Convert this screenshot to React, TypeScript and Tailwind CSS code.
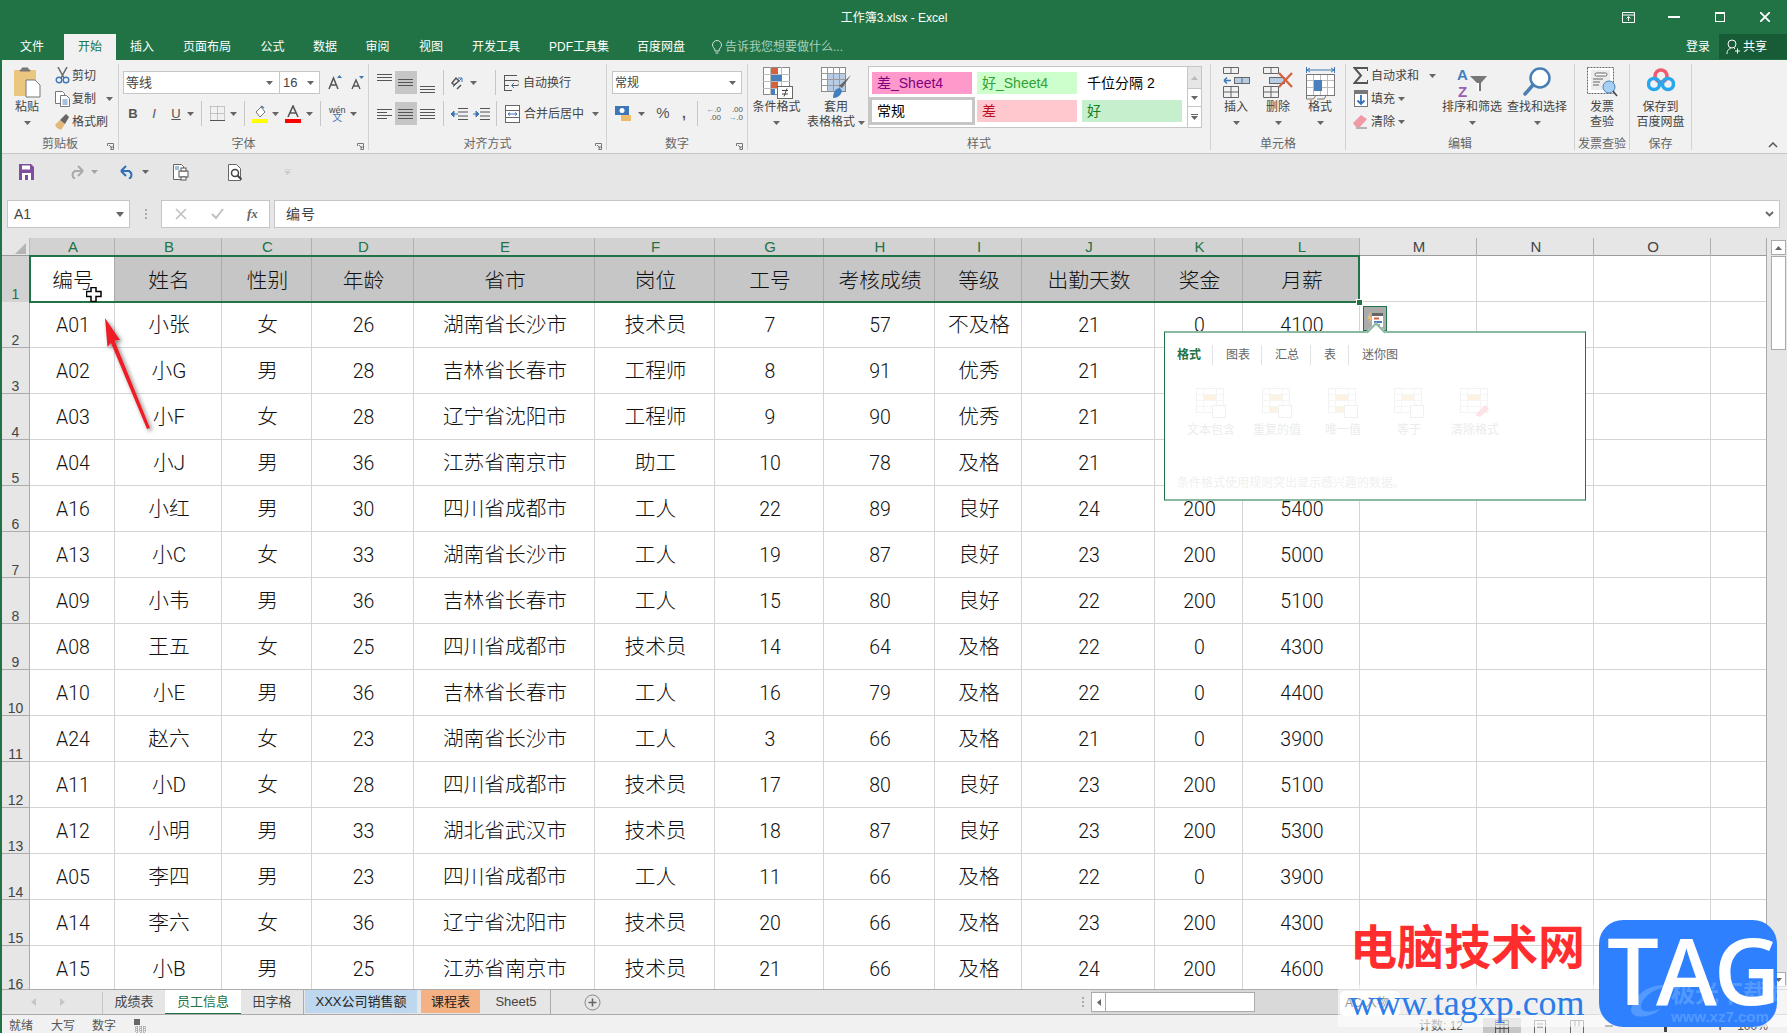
import React from 'react';

const COLS =
  'grid grid-cols-[28px_85px_107px_90px_102px_181px_120px_109px_111px_87px_133px_88px_117px_117px_117px_117px_56px]';

const HEAD = ['编号', '姓名', '性别', '年龄', '省市', '岗位', '工号', '考核成绩', '等级', '出勤天数', '奖金', '月薪'];

const ROWS = [
  ['A01', '小张', '女', '26', '湖南省长沙市', '技术员', '7', '57', '不及格', '21', '0', '4100'],
  ['A02', '小G', '男', '28', '吉林省长春市', '工程师', '8', '91', '优秀', '21', '200', '5100'],
  ['A03', '小F', '女', '28', '辽宁省沈阳市', '工程师', '9', '90', '优秀', '21', '200', '5100'],
  ['A04', '小J', '男', '36', '江苏省南京市', '助工', '10', '78', '及格', '21', '0', '4300'],
  ['A16', '小红', '男', '30', '四川省成都市', '工人', '22', '89', '良好', '24', '200', '5400'],
  ['A13', '小C', '女', '33', '湖南省长沙市', '工人', '19', '87', '良好', '23', '200', '5000'],
  ['A09', '小韦', '男', '36', '吉林省长春市', '工人', '15', '80', '良好', '22', '200', '5100'],
  ['A08', '王五', '女', '25', '四川省成都市', '技术员', '14', '64', '及格', '22', '0', '4300'],
  ['A10', '小E', '男', '36', '吉林省长春市', '工人', '16', '79', '及格', '22', '0', '4400'],
  ['A24', '赵六', '女', '23', '湖南省长沙市', '工人', '3', '66', '及格', '21', '0', '3900'],
  ['A11', '小D', '女', '28', '四川省成都市', '技术员', '17', '80', '良好', '23', '200', '5100'],
  ['A12', '小明', '男', '33', '湖北省武汉市', '技术员', '18', '87', '良好', '23', '200', '5300'],
  ['A05', '李四', '男', '23', '四川省成都市', '工人', '11', '66', '及格', '22', '0', '3900'],
  ['A14', '李六', '女', '36', '辽宁省沈阳市', '技术员', '20', '66', '及格', '23', '200', '4300'],
  ['A15', '小B', '男', '25', '江苏省南京市', '技术员', '21', '66', '及格', '24', '200', '4600'],
];

const TABS = [
  ['文件', 'w-[64px]'],
  ['开始', 'w-[52px]'],
  ['插入', 'w-[52px]'],
  ['页面布局', 'w-[78px]'],
  ['公式', 'w-[53px]'],
  ['数据', 'w-[52px]'],
  ['审阅', 'w-[53px]'],
  ['视图', 'w-[54px]'],
  ['开发工具', 'w-[76px]'],
  ['PDF工具集', 'w-[90px]'],
  ['百度网盘', 'w-[74px]'],
];

const Caret = ({ className = '' }: { className?: string }) => (
  <svg width="7" height="4" viewBox="0 0 7 4" className={`shrink-0 ${className}`}>
    <path d="M0 0h7L3.5 4z" fill="#666" />
  </svg>
);

const Sep = ({ className = '' }: { className?: string }) => (
  <div className={`w-px h-[25px] bg-[#c6c6c6] shrink-0 ${className}`} />
);

const Big = ({
  width,
  icon,
  lines,
  chevron = true,
  inlineCaret = false,
}: {
  width: string;
  icon: React.ReactNode;
  lines: string[];
  chevron?: boolean;
  inlineCaret?: boolean;
}) => (
  <div className={`${width} flex flex-col items-center shrink-0`}>
    <div className="h-[36px] pt-[3px] flex justify-center">{icon}</div>
    {lines.map((l, i) => (
      <div key={l} className="h-[15px] leading-[15px] whitespace-nowrap flex items-center gap-[3px]">
        {l}
        {inlineCaret && i === lines.length - 1 && <Caret />}
      </div>
    ))}
    {chevron && lines.length === 1 && (
      <div className="h-[15px] flex items-center">
        <Caret />
      </div>
    )}
  </div>
);

const Group = ({
  width,
  label,
  launcher = false,
  children,
}: {
  width: string;
  label: string;
  launcher?: boolean;
  children: React.ReactNode;
}) => (
  <div className={`${width} h-[86px] shrink-0 flex flex-col border-r border-[#d2d2d2]`}>
    <div className="h-[72px] flex">{children}</div>
    <div className="h-[14px] pt-[2px] flex items-center justify-center relative text-[#666] leading-none">
      {label}
      {launcher && (
        <svg width="7" height="7" viewBox="0 0 7 7" className="absolute right-[4px] bottom-[0px]">
          <path d="M.5 3V.5H6.500V6.500H3.500M2 2l3 3M5 3v2H3" fill="none" stroke="#777" />
        </svg>
      )}
    </div>
  </div>
);

const Lines = ({ rows }: { rows: [number, number][] }) => (
  <svg width="18" height="16" viewBox="0 0 18 16">
    {rows.map(([y, w]) => (
      <rect key={y} x="1" y={y} width={w} height="1" fill="#555" />
    ))}
  </svg>
);

const ClipboardIcon = () => (
  <svg width="29" height="31" viewBox="0 0 29 31">
    <rect x="0" y="3" width="22" height="26" rx="1" fill="#eac67f" />
    <path d="M6 4h10v-1h-2V1H8v2H6z" fill="#777" stroke="#777" />
    <path d="M12 13h9l5 5v12H12z" fill="#fff" stroke="#777" />
  </svg>
);

const ScissorsIcon = () => (
  <svg width="15" height="17" viewBox="0 0 15 17">
    <path d="M3 0l6 11M12 0L6 11" stroke="#666" strokeWidth="1.500" />
    <circle cx="4" cy="13" r="2.800" fill="none" stroke="#3f76b5" strokeWidth="1.400" />
    <circle cx="11" cy="13" r="2.800" fill="none" stroke="#3f76b5" strokeWidth="1.400" />
  </svg>
);

const CopyIcon = () => (
  <svg width="15" height="16" viewBox="0 0 15 16">
    <path d="M.5.500h7l2 2v10H.500z" fill="#fff" stroke="#777" />
    <path d="M5.500 4.500h6l3 3v8h-9z" fill="#fff" stroke="#777" />
    <path d="M7.500 9h5M7.500 11h5M7.500 13h5" stroke="#4d7fb8" />
  </svg>
);

const BrushIcon = () => (
  <svg width="16" height="16" viewBox="0 0 16 16">
    <path d="M1 11l5-5 5 4-4 6-4-2z" fill="#e4b878" />
    <path d="M6 6l6-6 3 3-4 7z" fill="#666" />
  </svg>
);

const FillIcon = () => (
  <svg width="16" height="18" viewBox="0 0 16 18">
    <path d="M4 7l5-5 4 5-5 5z" fill="#fff" stroke="#777" />
    <path d="M9 1l3 2" stroke="#3f76b5" strokeWidth="1.500" />
    <rect x="0" y="14" width="16" height="4" fill="#ffff00" />
  </svg>
);

const FontColorIcon = () => (
  <svg width="16" height="18" viewBox="0 0 16 18">
    <path d="M3 12L8 1l5 11M5 8h6" fill="none" stroke="#555" strokeWidth="1.600" />
    <rect x="0" y="14" width="16" height="4" fill="#ff0000" />
  </svg>
);

const BorderIcon = () => (
  <svg width="15" height="15" viewBox="0 0 15 15">
    <path d="M.5.500h14v14M.5.5v14M7.500.5v14M.5 7.500h14" fill="none" stroke="#999" strokeDasharray="1 1" />
    <path d="M0 14.500h15" stroke="#555" />
  </svg>
);

const WrapIcon = () => (
  <svg width="15" height="18" viewBox="0 0 15 18">
    <path d="M1 1.500h12M1 6.500h12a2 2 0 0 1 0 5H8M1 11.500h4M1 16.500h7" fill="none" stroke="#555" />
    <path d="M10 9l-2.500 2.500L10 14" fill="none" stroke="#3f76b5" />
    <path d="M.5 1v16" stroke="#555" />
  </svg>
);

const MergeIcon = () => (
  <svg width="15" height="18" viewBox="0 0 15 18">
    <rect x=".5" y=".5" width="14" height="17" fill="#fff" stroke="#666" />
    <path d="M0 5.500h15M0 12.500h15" stroke="#666" />
    <path d="M3 9h9M3 9l2-1.500M3 9l2 1.500M12 9l-2-1.500M12 9l-2 1.500" stroke="#3f76b5" fill="none" />
  </svg>
);

const CondIcon = () => (
  <svg width="30" height="32" viewBox="0 0 30 32">
    <rect x=".5" y=".5" width="26" height="27" fill="#fff" stroke="#888" />
    <path d="M0 7.500h27M0 14.500h27M0 21.500h27M7.500 0v28M18.500 0v28" stroke="#bbb" />
    <rect x="8" y="1" width="7" height="6" fill="#d6613f" />
    <rect x="8" y="8" width="11" height="6" fill="#4a7fbb" />
    <rect x="8" y="15" width="7" height="6" fill="#d6613f" />
    <rect x="8" y="22" width="4" height="6" fill="#4a7fbb" />
    <rect x="14.500" y="19.500" width="15" height="12" fill="#fff" stroke="#666" />
    <path d="M19 23.500h6M19 27h6M24 21.500l-3 8" stroke="#444" fill="none" />
  </svg>
);

const TableIcon = () => (
  <svg width="31" height="32" viewBox="0 0 31 32">
    <rect x=".5" y=".5" width="24" height="24" fill="#fff" stroke="#888" />
    <rect x="6" y="6" width="18" height="18" fill="#b7cde6" />
    <path d="M6.500 0v25M12.500 0v25M18.500 0v25M0 6.500h25M0 12.500h25M0 18.500h25" stroke="#999" />
    <path d="M30 8l-9 13-3-2z" fill="#666" />
    <path d="M12 31c0-6 3-10 7-10l2 3c-1 4-4 7-9 7z" fill="#3f7fc0" />
  </svg>
);

const InsertIcon = () => (
  <svg width="27" height="31" viewBox="0 0 27 31">
    <path d="M.5.500h15v6H.500zM8 .5v6" fill="none" stroke="#666" />
    <rect x="11.500" y="10.500" width="15" height="6" fill="#b7cde6" stroke="#666" />
    <path d="M19 10v7" stroke="#666" />
    <path d="M1 13.500h7M1 13.500l3-3M1 13.500l3 3" fill="none" stroke="#3f76b5" strokeWidth="1.500" />
    <path d="M.5 19.500h15v11H.500zM8 19.500v11M.5 25h15" fill="none" stroke="#666" />
  </svg>
);

const DeleteIcon = () => (
  <svg width="31" height="31" viewBox="0 0 31 31">
    <path d="M.5.500h15v6H.500zM8 .5v6" fill="none" stroke="#666" />
    <rect x="6.500" y="10.500" width="15" height="6" fill="#b7cde6" stroke="#666" />
    <path d="M.5 19.500h15v11H.500zM8 19.500v11M.5 25h15" fill="none" stroke="#666" />
    <path d="M16 6l13 14M29 6L16 20" stroke="#d6613f" strokeWidth="2.200" />
  </svg>
);

const FormatIcon = () => (
  <svg width="29" height="33" viewBox="0 0 29 33">
    <path d="M1 3h27M1 3l3-2M1 3l3 2M28 3l-3-2M28 3l-3 2M.5 0v6M28.500 0v6" fill="none" stroke="#3f76b5" />
    <rect x=".5" y="7.500" width="28" height="21" fill="#fff" stroke="#777" />
    <path d="M7.500 8v20M21.500 8v20M14.500 8v20M1 13.500h27M1 20.500h27" stroke="#bbb" />
    <rect x="8" y="13" width="8" height="11" fill="#4a7fbb" />
    <path d="M.5 28v4h7l2-3M11 32h7l2-3" fill="none" stroke="#777" />
  </svg>
);

const SigmaIcon = () => (
  <svg width="15" height="17" viewBox="0 0 15 17">
    <path d="M15 4V1H1.500L8 8.500 1.500 16H15v-3" fill="none" stroke="#555" strokeWidth="2" />
  </svg>
);

const FillDownIcon = () => (
  <svg width="14" height="17" viewBox="0 0 14 17">
    <rect x=".5" y=".5" width="13" height="16" fill="#fff" stroke="#777" />
    <rect x="0" y="0" width="14" height="4" fill="#777" />
    <path d="M7 5v9M3.500 10.500L7 14l3.500-3.500" fill="none" stroke="#2f6fb5" strokeWidth="1.800" />
  </svg>
);

const EraserIcon = () => (
  <svg width="15" height="15" viewBox="0 0 15 15">
    <path d="M0 9l8-8 6 4-7 8H3z" fill="#ef9aa5" />
    <path d="M3 14h11" stroke="#777" />
  </svg>
);

const SortIcon = () => (
  <svg width="30" height="32" viewBox="0 0 30 32">
    <text x="0" y="13" fontSize="15" fontWeight="700" fill="#3f7fc0" fontFamily="Liberation Sans">A</text>
    <text x="1" y="30" fontSize="15" fontWeight="700" fill="#9a5fb5" fontFamily="Liberation Sans">Z</text>
    <path d="M13 9h17l-6 7v8h-4v-8z" fill="#777" />
    <path d="M20 16v8h2v-8" fill="#fff" />
  </svg>
);

const SearchIcon = () => (
  <svg width="28" height="31" viewBox="0 0 28 31">
    <circle cx="17" cy="11" r="9.500" fill="#fff" stroke="#4a7fb5" strokeWidth="2.500" />
    <path d="M10 18L2 27" stroke="#4a7fb5" strokeWidth="3.500" strokeLinecap="round" />
  </svg>
);

const InvoiceIcon = () => (
  <svg width="31" height="31" viewBox="0 0 31 31">
    <rect x=".5" y=".5" width="26" height="26" fill="#fff" stroke="#666" strokeDasharray="2 1" />
    <rect x="4" y="3" width="19" height="20" fill="#ececec" />
    <rect x="8" y="6" width="12" height="3" rx="1.500" fill="#fff" stroke="#666" />
    <path d="M6 12h10M6 15h7M6 18h6" stroke="#666" />
    <circle cx="22" cy="20" r="6" fill="#a5d0f3" stroke="#4a7fb5" />
    <path d="M26 24l4 5" stroke="#444" strokeWidth="1.500" />
  </svg>
);

const BaiduIcon = () => (
  <svg width="28" height="26" viewBox="0 0 28 26">
    <circle cx="14" cy="9" r="6" fill="none" stroke="#ef5a6c" strokeWidth="3.500" />
    <circle cx="7" cy="17" r="5.500" fill="none" stroke="#29a7ee" strokeWidth="3.500" />
    <circle cx="21" cy="17" r="5.500" fill="none" stroke="#29a7ee" strokeWidth="3.500" />
  </svg>
);

const SmallRow = ({ icon, text, caret, iconBox }: { icon: React.ReactNode; text: string; caret: string; iconBox: string }) => (
  <div className="h-[23px] flex items-center">
    <div className={`${iconBox} flex justify-center shrink-0`}>{icon}</div>
    <span className="whitespace-nowrap">{text}</span>
    <Caret className={caret} />
  </div>
);

const Ribbon = () => (
  <div className="h-[94px] bg-[#f1f1f1] border-b border-[#c6c6c6] pt-[4px] flex text-[12px] text-[#444]">
    <Group width="w-[117px]" label="剪贴板" launcher>
      <Big
        width="w-[50px]"
        icon={
          <div className="pl-[3px]">
            <ClipboardIcon />
          </div>
        }
        lines={['粘贴']}
      />
      <div className="flex flex-col">
        <SmallRow icon={<ScissorsIcon />} text="剪切" caret="hidden" iconBox="w-[20px]" />
        <SmallRow icon={<CopyIcon />} text="复制" caret="ml-[10px]" iconBox="w-[20px]" />
        <SmallRow icon={<BrushIcon />} text="格式刷" caret="hidden" iconBox="w-[20px]" />
      </div>
    </Group>

    <Group width="w-[250px]" label="字体" launcher>
      <div className="pl-[4px] pt-[7px] flex flex-col gap-[8px]">
        <div className="h-[23px] flex items-center">
          <div className="w-[157px] h-[23px] bg-white border border-[#c6c6c6] flex items-center justify-between pl-[2px] pr-[6px] text-[13px]">
            等线
            <Caret />
          </div>
          <div className="w-[40px] h-[23px] bg-white border border-l-0 border-[#c6c6c6] flex items-center justify-between pl-[3px] pr-[5px] text-[13px]">
            16
            <Caret />
          </div>
          <div className="w-[27px] flex justify-center pl-[3px]">
            <svg width="15" height="15" viewBox="0 0 15 15">
              <path d="M1 14L5.500 3 10 14M3 10h5" fill="none" stroke="#555" strokeWidth="1.500" />
              <path d="M9 3l2.500-3L14 3z" fill="#3f76b5" />
            </svg>
          </div>
          <div className="w-[20px] flex justify-center">
            <svg width="13" height="14" viewBox="0 0 13 14">
              <path d="M1 13l4-9 4 9M2.500 10h5" fill="none" stroke="#555" strokeWidth="1.400" />
              <path d="M8 0h5l-2.500 3z" fill="#3f76b5" />
            </svg>
          </div>
        </div>
        <div className="h-[23px] flex items-center text-[#555]">
          <span className="w-[20px] text-center font-bold text-[13px]">B</span>
          <span className="w-[22px] text-center italic text-[13px]">I</span>
          <span className="w-[22px] text-center underline text-[13px]">U</span>
          <Caret className="mr-[7px]" />
          <Sep className="mr-[8px]" />
          <BorderIcon />
          <Caret className="ml-[5px] mr-[7px]" />
          <Sep className="mr-[7px]" />
          <FillIcon />
          <Caret className="ml-[4px] mr-[6px]" />
          <FontColorIcon />
          <Caret className="ml-[5px] mr-[7px]" />
          <Sep className="mr-[8px]" />
          <div className="flex flex-col items-center leading-[8px] text-[9px]">
            <span className="text-[#444]">wén</span>
            <span className="text-[#3f76b5] text-[10px]">文</span>
          </div>
          <Caret className="ml-[4px]" />
        </div>
      </div>
    </Group>

    <Group width="w-[238px]" label="对齐方式" launcher>
      <div className="pl-[6px] pt-[7px] flex flex-col gap-[8px]">
        <div className="h-[23px] flex items-center">
          <div className="w-[20px] h-[23px] flex justify-center items-start pt-[1px]">
            <Lines rows={[[2, 15], [5, 15], [8, 15]]} />
          </div>
          <div className="w-[22px] h-[23px] bg-[#c6c6c6] flex justify-center items-center">
            <Lines rows={[[4, 15], [7, 15], [10, 15]]} />
          </div>
          <div className="w-[22px] h-[23px] flex justify-center items-end">
            <Lines rows={[[8, 15], [11, 15], [14, 15]]} />
          </div>
          <Sep className="ml-[4px] mr-[7px]" />
          <svg width="16" height="16" viewBox="0 0 16 16">
            <path d="M2 12l9-9M11 3H7M11 3v4" fill="none" stroke="#3f76b5" />
            <path d="M1 8l4-5 3 3-5 4zM6 14l4-4" fill="none" stroke="#555" strokeWidth="1.500" />
          </svg>
          <Caret className="ml-[3px] mr-[18px]" />
          <Sep className="mr-[8px]" />
          <WrapIcon />
          <span className="ml-[4px] whitespace-nowrap">自动换行</span>
        </div>
        <div className="h-[23px] flex items-center">
          <div className="w-[20px] flex justify-center">
            <Lines rows={[[3, 15], [6, 10], [9, 15], [12, 10]]} />
          </div>
          <div className="w-[22px] h-[23px] bg-[#c6c6c6] flex justify-center items-center">
            <Lines rows={[[3, 15], [6, 15], [9, 15], [12, 15]]} />
          </div>
          <div className="w-[22px] flex justify-center">
            <Lines rows={[[3, 15], [6, 15], [9, 15], [12, 15]]} />
          </div>
          <Sep className="ml-[4px] mr-[7px]" />
          <svg width="17" height="14" viewBox="0 0 17 14">
            <path d="M7 1.500h10M7 5h10M7 9h10M7 12.500h10" stroke="#555" />
            <path d="M0 7h7M0 7l3-3v6z" fill="#3f76b5" stroke="#3f76b5" />
          </svg>
          <svg width="17" height="14" viewBox="0 0 17 14" className="ml-[5px]">
            <path d="M7 1.500h10M7 5h10M7 9h10M7 12.500h10" stroke="#555" />
            <path d="M0 7h6M6 7l-3-3v6z" fill="#3f76b5" stroke="#3f76b5" />
          </svg>
          <Sep className="ml-[6px] mr-[8px]" />
          <MergeIcon />
          <span className="ml-[4px] whitespace-nowrap">合并后居中</span>
          <Caret className="ml-[8px]" />
        </div>
      </div>
    </Group>

    <Group width="w-[141px]" label="数字" launcher>
      <div className="pl-[5px] pt-[7px] flex flex-col gap-[8px]">
        <div className="w-[130px] h-[23px] bg-white border border-[#c6c6c6] flex items-center justify-between pl-[2px] pr-[5px] text-[12px]">
          常规
          <Caret />
        </div>
        <div className="h-[23px] flex items-center text-[#555]">
          <svg width="17" height="17" viewBox="0 0 17 17" className="ml-[3px]">
            <rect x="0" y="1" width="14" height="9" fill="#3f76b5" />
            <circle cx="7" cy="5.500" r="2.500" fill="#fff" />
            <path d="M6 11h10M6 13h10M6 15h10" stroke="#eaa93f" strokeWidth="1.500" />
          </svg>
          <Caret className="ml-[6px] mr-[10px]" />
          <span className="text-[15px] w-[16px] text-center">%</span>
          <span className="text-[14px] font-bold w-[26px] text-center">,</span>
          <Sep className="mr-[7px]" />
          <div className="text-[8px] leading-[8px] w-[16px] text-right">
            <div>
              <span className="text-[#3f76b5] font-bold">←</span>.0
            </div>
            <div>.00</div>
          </div>
          <div className="text-[8px] leading-[8px] w-[16px] ml-[6px] text-right">
            <div>.00</div>
            <div>
              <span className="text-[#3f76b5] font-bold">→</span>.0
            </div>
          </div>
        </div>
      </div>
    </Group>

    <Group width="w-[463px]" label="样式">
      <Big
        width="w-[57px]"
        icon={
          <div className="pl-[3px]">
            <CondIcon />
          </div>
        }
        lines={['条件格式']}
      />
      <Big width="w-[62px]" icon={<TableIcon />} lines={['套用', '表格格式']} inlineCaret />
      <div className="w-[334px] h-[62px] mt-[2px] bg-white border border-[#c6c6c6] flex text-[14px] ml-[1px]">
        <div className="flex-1 grid grid-cols-[100px_100px_100px] grid-rows-[22px_22px] gap-x-[5px] gap-y-[6px] pt-[5px] pl-[3px]">
          <div className="bg-[#ff99cc] text-[#800080] pl-[5px] leading-[22px]">差_Sheet4</div>
          <div className="bg-[#ccffcc] text-[#33a033] pl-[5px] leading-[22px]">好_Sheet4</div>
          <div className="text-black pl-[5px] leading-[22px]">千位分隔 2</div>
          <div className="text-black pl-[5px] leading-[22px] outline-[3px] outline-[#c6c6c6]">常规</div>
          <div className="bg-[#ffc7ce] text-[#c00d1e] pl-[5px] leading-[22px]">差</div>
          <div className="bg-[#c6efce] text-[#18801f] pl-[5px] leading-[22px]">好</div>
        </div>
        <div className="w-[14px] flex flex-col border-l border-[#c6c6c6]">
          <div className="h-[21px] bg-[#e6e6e6] flex items-center justify-center">
            <svg width="7" height="4" viewBox="0 0 7 4">
              <path d="M0 4h7L3.500 0z" fill="#bbb" />
            </svg>
          </div>
          <div className="h-[19px] border-y border-[#c6c6c6] flex items-center justify-center">
            <Caret />
          </div>
          <div className="flex-1 flex flex-col items-center justify-center gap-[1px]">
            <div className="w-[7px] h-px bg-[#666]" />
            <Caret />
          </div>
        </div>
      </div>
    </Group>

    <Group width="w-[135px]" label="单元格">
      <div className="pl-[4px] flex">
        <Big width="w-[42px]" icon={<InsertIcon />} lines={['插入']} />
        <Big width="w-[42px]" icon={<DeleteIcon />} lines={['删除']} />
        <Big width="w-[42px]" icon={<FormatIcon />} lines={['格式']} />
      </div>
    </Group>

    <Group width="w-[229px]" label="编辑">
      <div className="flex flex-col pl-[4px] w-[94px] shrink-0">
        <SmallRow icon={<SigmaIcon />} text="自动求和" caret="ml-[10px]" iconBox="w-[21px]" />
        <SmallRow icon={<FillDownIcon />} text="填充" caret="ml-[3px]" iconBox="w-[21px]" />
        <SmallRow icon={<EraserIcon />} text="清除" caret="ml-[3px]" iconBox="w-[21px]" />
      </div>
      <Big width="w-[64px]" icon={<SortIcon />} lines={['排序和筛选']} />
      <Big width="w-[66px]" icon={<SearchIcon />} lines={['查找和选择']} />
    </Group>

    <Group width="w-[55px]" label="发票查验">
      <Big width="w-full" icon={<InvoiceIcon />} lines={['发票', '查验']} />
    </Group>
    <Group width="w-[62px]" label="保存">
      <Big width="w-full" icon={<BaiduIcon />} lines={['保存到', '百度网盘']} />
    </Group>
    <div className="flex-1 flex justify-end items-end pb-[5px] pr-[9px]">
      <svg width="10" height="6" viewBox="0 0 10 6">
        <path d="M1 5l4-4 4 4" fill="none" stroke="#555" strokeWidth="1.500" />
      </svg>
    </div>
  </div>
);

const QuickBar = () => (
  <div className="h-[46px] bg-[#e6e6e6] flex items-center pl-[17px] pb-[10px]">
    <svg width="15" height="16" viewBox="0 0 15 16">
      <path d="M0 0h12l3 3v13H0z" fill="#7e4f9e" />
      <rect x="3" y="1.500" width="8" height="4" fill="#fff" />
      <rect x="3" y="9" width="9" height="7" fill="#fff" />
      <rect x="6" y="11" width="3" height="5" fill="#7e4f9e" />
    </svg>
    <svg width="15" height="14" viewBox="0 0 15 14" className="ml-[35px]">
      <path d="M14 6H6a4.500 4.500 0 0 0 0 8M14 6L9 1M14 6l-5 5" fill="none" stroke="#aaa" strokeWidth="2" />
    </svg>
    <Caret className="ml-[7px] opacity-50" />
    <svg width="15" height="14" viewBox="0 0 15 14" className="ml-[22px]">
      <path d="M1 6h8a4.500 4.500 0 0 1 0 8M1 6l5-5M1 6l5 5" fill="none" stroke="#2f6fb5" strokeWidth="2" />
    </svg>
    <Caret className="ml-[7px]" />
    <svg width="16" height="17" viewBox="0 0 16 17" className="ml-[24px]">
      <path d="M.5.500h8l2 2v13H.5z" fill="#fff" stroke="#666" />
      <rect x="6" y="7" width="9" height="6" fill="#fff" stroke="#555" />
      <rect x="8" y="4" width="5" height="3" fill="#fff" stroke="#555" />
      <rect x="8" y="13" width="5" height="3" fill="#fff" stroke="#555" />
      <path d="M2 3h4M2 5h4" stroke="#4a7fb5" />
    </svg>
    <svg width="15" height="17" viewBox="0 0 15 17" className="ml-[39px]">
      <path d="M.5.500h8l4 4v12H.5z" fill="#fff" stroke="#666" />
      <circle cx="7" cy="9" r="3.500" fill="none" stroke="#444" strokeWidth="1.500" />
      <path d="M9.500 11.500l4 4" stroke="#444" strokeWidth="2" />
    </svg>
    <div className="ml-[41px] flex flex-col items-center gap-[1px]">
      <div className="w-[6px] h-px bg-[#d2d2d2]" />
      <Caret className="opacity-20" />
    </div>
  </div>
);

const FormulaBar = () => (
  <div className="h-[28px] flex items-stretch pl-[5px]">
    <div className="w-[123px] bg-white border border-[#c6c6c6] flex items-center justify-between pl-[6px] pr-[5px] text-[14px] text-[#444]">
      A1
      <svg width="8" height="5" viewBox="0 0 8 5">
        <path d="M0 0h8L4 5z" fill="#666" />
      </svg>
    </div>
    <div className="w-[31px] flex flex-col items-center justify-center gap-[2px]">
      <div className="w-[2px] h-[2px] bg-[#aaa]" />
      <div className="w-[2px] h-[2px] bg-[#aaa]" />
      <div className="w-[2px] h-[2px] bg-[#aaa]" />
    </div>
    <div className="w-[109px] bg-white border border-[#c6c6c6] flex items-center text-[#bbb]">
      <svg width="12" height="12" viewBox="0 0 12 12" className="ml-[13px]">
        <path d="M1 1l10 10M11 1L1 11" stroke="#c0c0c0" strokeWidth="1.600" />
      </svg>
      <svg width="13" height="12" viewBox="0 0 13 12" className="ml-[24px]">
        <path d="M1 6l4 4 7-9" fill="none" stroke="#c0c0c0" strokeWidth="2" />
      </svg>
      <span className="ml-[23px] text-[13px] italic font-bold text-[#666] [font-family:'Liberation_Serif',serif]">fx</span>
    </div>
    <div className="w-[1506px] ml-[4px] bg-white border border-[#c6c6c6] flex items-center justify-between pl-[11px] pr-[5px] text-[14px] text-[#444] tracking-[1px]">
      编号
      <svg width="9" height="6" viewBox="0 0 9 6">
        <path d="M1 1l3.500 3.500L8 1" fill="none" stroke="#666" strokeWidth="1.800" />
      </svg>
    </div>
  </div>
);

const cellText = (v: string) => (/^[\x00-\x7f]+$/.test(v) ? 'text-[19.5px]' : 'text-[20.7px]');

const Sheet = () => (
  <div className="h-[751px] flex">
    <div className="w-[1765px] overflow-hidden bg-white border-r border-[#ababab] shrink-0">
      {/* column letters */}
      <div className={`${COLS} h-[18px] bg-[#e6e6e6] border-b border-[#9b9b9b] text-[15px] leading-[18px]`}>
        <div className="border-r border-[#bbb] flex items-end justify-end pr-[3px] pb-[2px]">
          <svg width="11" height="11" viewBox="0 0 11 11">
            <path d="M11 0v11H0z" fill="#b4b4b4" />
          </svg>
        </div>
        {['A', 'B', 'C', 'D', 'E', 'F', 'G', 'H', 'I', 'J', 'K', 'L'].map((c) => (
          <div key={c} className="bg-[#d2d2d2] text-[#217346] text-center pl-[2px] border-r border-[#b0b0b0]">
            {c}
          </div>
        ))}
        {['M', 'N', 'O'].map((c) => (
          <div key={c} className="text-[#444] text-center pl-[2px] border-r border-[#b0b0b0]">
            {c}
          </div>
        ))}
        <div className="text-[#444] pl-[54px] overflow-hidden">P</div>
      </div>

      {/* row 1, the selected one */}
      <div className={`${COLS} h-[46px] border-b border-[#d4d4d4]`}>
        <div className="bg-[#d2d2d2] text-[#217346] text-[14px] leading-[14px] flex items-end justify-center border-r border-[#9b9b9b]">
          1
        </div>
        {HEAD.map((h, i) => (
          <div
            key={h}
            className={`flex items-center justify-center text-[20.7px] font-light text-[#111] pt-[4px] pl-[2px] border-r border-[#acacac] ${
              i === 0 ? 'bg-white' : 'bg-[#c6c6c6]'
            }`}
          >
            {h}
          </div>
        ))}
        <div className="border-r border-[#d4d4d4]" />
        <div className="border-r border-[#d4d4d4]" />
        <div className="border-r border-[#d4d4d4]" />
        <div />
      </div>

      {ROWS.map((row, r) => (
        <div key={row[0]} className={`${COLS} h-[46px]`}>
          <div className="bg-[#e6e6e6] text-[#444] text-[14px] leading-[14px] flex items-end justify-center border-r border-b border-[#ababab]">
            {r + 2}
          </div>
          {row.map((v, c) => (
            <div
              key={c}
              className={`flex items-center justify-center text-[#111] font-light border-r border-b border-[#d4d4d4] pt-[3px] pl-[2px] [font-family:Roboto,'Noto_Sans_CJK_SC',sans-serif] ${cellText(v)}`}
            >
              {v}
            </div>
          ))}
          <div className="border-r border-b border-[#d4d4d4]" />
          <div className="border-r border-b border-[#d4d4d4]" />
          <div className="border-r border-b border-[#d4d4d4]" />
          <div className="border-b border-[#d4d4d4]" />
        </div>
      ))}
    </div>

    {/* vertical scrollbar */}
    <div className="flex-1 bg-[#e6e6e6] flex flex-col pl-[4px] pr-[1px] pt-[2px]">
      <div className="h-[15px] bg-white border border-[#ababab] flex items-center justify-center">
        <svg width="7" height="4" viewBox="0 0 7 4">
          <path d="M0 4h7L3.500 0z" fill="#666" />
        </svg>
      </div>
      <div className="h-[94px] mt-px bg-white border border-[#ababab]" />
      <div className="flex-1" />
      <div className="h-[15px] mb-[2px] bg-white border border-[#ababab] flex items-center justify-center">
        <Caret />
      </div>
    </div>
  </div>
);

const SheetTabs = () => (
  <div className="h-[29px] bg-[#e6e6e6] border-t border-[#ababab] flex text-[13px] text-[#444] relative">
    <div className="w-[100px] flex items-center h-[24px] pl-[29px] gap-[24px] shrink-0">
      <svg width="5" height="8" viewBox="0 0 5 8">
        <path d="M5 0v8L0 4z" fill="#c6c6c6" />
      </svg>
      <svg width="5" height="8" viewBox="0 0 5 8">
        <path d="M0 0v8l5-4z" fill="#c6c6c6" />
      </svg>
    </div>
    <Sep className="h-[20px] mt-[2px]" />
    <div className="w-[62px] h-[24px] flex items-center justify-center">成绩表</div>
    <div className="w-[76px] h-[25px] bg-white text-[#217346] border-b-2 border-[#217346] flex items-center justify-center">
      员工信息
    </div>
    <div className="w-[63px] h-[24px] flex items-center justify-center border-r border-[#ababab]">田字格</div>
    <div className="w-[112px] h-[23px] ml-[1px] bg-[#bdd7ee] text-[#222] flex items-center justify-center">XXX公司销售额</div>
    <div className="w-[59px] h-[23px] ml-[4px] bg-[#f4b183] text-[#222] flex items-center justify-center">课程表</div>
    <div className="w-[69px] h-[24px] ml-[2px] flex items-center justify-center border-r border-[#ababab]">Sheet5</div>
    <div className="ml-[33px] h-[24px] flex items-center">
      <svg width="17" height="17" viewBox="0 0 17 17">
        <circle cx="8.500" cy="8.500" r="7.500" fill="none" stroke="#888" />
        <path d="M8.500 4.500v8M4.500 8.500h8" stroke="#666" strokeWidth="1.600" />
      </svg>
    </div>
    <div className="flex-1" />
    <div className="w-[17px] h-[24px] flex flex-col items-center justify-center gap-[2px]">
      <div className="w-[2px] h-[2px] bg-[#aaa]" />
      <div className="w-[2px] h-[2px] bg-[#aaa]" />
      <div className="w-[2px] h-[2px] bg-[#aaa]" />
    </div>
    <div className="w-[677px] h-[24px] flex py-[2px] pr-[1px] mr-[19px] bg-[#d9d9d9] shrink-0">
      <div className="w-[15px] bg-white border border-[#ababab] flex items-center justify-center">
        <svg width="4" height="7" viewBox="0 0 4 7">
          <path d="M4 0v7L0 3.500z" fill="#666" />
        </svg>
      </div>
      <div className="w-[149px] bg-white border border-l-0 border-[#ababab]" />
    </div>
    <div className="absolute left-0 right-0 bottom-0 h-[4px] bg-[#f1f1f1] border-t border-[#ababab]" />
  </div>
);

const StatusBar = () => (
  <div className="h-[15px] bg-[#f1f1f1] flex items-center text-[12px] text-[#555] leading-none overflow-hidden pl-[7px]">
    <span className="w-[42px]">就绪</span>
    <span className="w-[41px]">大写</span>
    <span className="w-[42px]">数字</span>
    <svg width="13" height="14" viewBox="0 0 13 14" className="shrink-0">
      <rect x="0" y="0" width="6" height="6" fill="#666" />
      <path d="M1 8h11M1 10h11M1 12h11M3 7v7M7 7v7M10 7v7" stroke="#888" strokeDasharray="1 1" />
    </svg>
    <span className="ml-[1272px] w-[64px] whitespace-nowrap">计数: 12</span>
    <div className="w-[38px] h-[15px] bg-[#c6c6c6] flex justify-center items-start pt-[2px]">
      <svg width="14" height="13" viewBox="0 0 14 13">
        <path d="M.5.500h13v13H.500zM.5 4.500h13M.5 8.500h13M5 .5v13M9 .5v13" fill="none" stroke="#555" />
      </svg>
    </div>
    <div className="w-[37px] flex justify-center pt-[2px]">
      <svg width="14" height="13" viewBox="0 0 14 13">
        <path d="M1.500.500h11v13h-11zM4 4h6M4 7h6" fill="none" stroke="#666" />
      </svg>
    </div>
    <div className="w-[37px] flex justify-center pt-[2px]">
      <svg width="14" height="13" viewBox="0 0 14 13">
        <path d="M.5.500h13v13H.500zM5 .5v6M9 .5v6" fill="none" stroke="#666" />
      </svg>
    </div>
    <div className="w-[8px] h-[2px] bg-[#555] ml-[10px] shrink-0" />
    <div className="w-[98px] h-px bg-[#888] relative mx-[2px] shrink-0">
      <div className="absolute left-[49px] -top-[6px] w-[3px] h-[13px] bg-[#444]" />
    </div>
    <span className="text-[#555] font-bold text-[14px] ml-[1px]">+</span>
    <span className="ml-[13px]">100%</span>
  </div>
);

const Popup = () => (
  <div className="absolute left-[1164px] top-[331px] w-[422px] h-[170px] bg-white border border-[#217346] border-t-[#8bb8a0] border-b-[#8bb8a0] border-t-2 border-b-2 text-[12px]">
    <div className="absolute -top-[8px] left-[204px] w-[14px] h-[14px] rotate-45 bg-white border-l-2 border-t-2 border-[#8bb8a0]" />
    <div className="flex items-center h-[20px] mt-[12px] pl-[12px] text-[#666]">
      <span className="w-[26px] font-bold text-[#217346]">格式</span>
      <div className="w-px h-[20px] bg-[#e2e2e2] ml-[9px] mr-[13px]" />
      <span className="w-[25px]">图表</span>
      <div className="w-px h-[20px] bg-[#e2e2e2] ml-[10px] mr-[13px]" />
      <span className="w-[25px]">汇总</span>
      <div className="w-px h-[20px] bg-[#e2e2e2] ml-[10px] mr-[13px]" />
      <span className="w-[13px]">表</span>
      <div className="w-px h-[20px] bg-[#e2e2e2] ml-[11px] mr-[13px]" />
      <span className="whitespace-nowrap">迷你图</span>
    </div>
    <div className="flex mt-[23px] pl-[13px] text-[#ececec] text-[12px]">
      {['文本包含', '重复的值', '唯一值', '等于', '清除格式'].map((t, i) => (
        <div key={t} className="w-[66px] flex flex-col items-center">
          <svg width="31" height="30" viewBox="0 0 31 30">
            <rect x=".5" y=".5" width="27" height="24" fill="#fff" stroke="#f2f2f2" />
            <path d="M0 6.500h28M0 12.500h28M0 18.500h28M7.500 0v25M20.500 0v25" stroke="#f5f5f5" />
            <rect x="8" y="7" width="12" height="5" fill="#fdf3e2" />
            {(i === 1 || i === 2) && <rect x="8" y="19" width="12" height="5" fill="#fdf3e2" />}
            {i === 4 ? (
              <path d="M15 27l10-10 4 4-9 8z" fill="#fde3e6" />
            ) : (
              <rect x="16.500" y="17.500" width="13" height="12" fill="#fff" stroke="#f0f0f0" />
            )}
          </svg>
          <span className="mt-[3px] whitespace-nowrap">{t}</span>
        </div>
      ))}
    </div>
    <div className="mt-[35px] pl-[12px] text-[#f0f0f0]">条件格式使用规则突出显示感兴趣的数据。</div>
  </div>
);

const Overlays = () => (
  <>
    {/* selection border around A1:L1 */}
    <div className="absolute left-[29px] top-[255px] w-[1331px] h-[48px] border-2 border-[#217346] pointer-events-none" />
    <div className="absolute left-[1356px] top-[299px] w-[7px] h-[7px] bg-[#217346] border border-white" />

    {/* quick analysis button */}
    <div className="absolute left-[1363px] top-[306px] w-[24px] h-[25px] bg-[#ababab] border border-[#217346] flex items-center justify-center">
      <svg width="16" height="16" viewBox="0 0 16 16">
        <path d="M4 0L0 8h3l-2 5 5-7H3z" fill="#f0c070" />
        <rect x="5" y="2" width="11" height="14" fill="#fff" />
        <rect x="5" y="2" width="11" height="3" fill="#666" />
        <rect x="7" y="6.500" width="5" height="2" fill="#d6613f" />
        <rect x="7" y="10" width="8" height="2" fill="#4a7fbb" />
        <rect x="7" y="13" width="6" height="2" fill="#6fa77e" />
      </svg>
    </div>

    <Popup />

    {/* red annotation arrow */}
    <svg width="60" height="125" viewBox="0 0 60 125" className="absolute left-[100px] top-[312px] overflow-visible">
      <defs>
        <filter id="arrowShadow" x="-50%" y="-20%" width="200%" height="140%">
          <feDropShadow dx="2" dy="2" stdDeviation="2" floodColor="#000" floodOpacity="0.5" />
        </filter>
      </defs>
      <path d="M5 6L20 28 14.500 28.500 50 116 47 117 11 31 7.500 35z" fill="#ee1c25" filter="url(#arrowShadow)" />
    </svg>

    {/* excel cell cursor */}
    <svg width="16" height="15" viewBox="0 0 16 15" className="absolute left-[86px] top-[287px]">
      <path d="M5 .5h5v4h5v5h-5v5H5v-5H.500v-5H5z" fill="#fff" stroke="#000" strokeWidth="1.500" />
    </svg>

    {/* site watermark */}
    <div className="absolute left-[1338px] top-[985px] w-[449px] h-[42px] bg-white/60" />
    <div className="absolute left-[1340px] top-[991px] w-[60px] h-[25px] bg-white rounded-[5px] text-[12px] text-[#999] pl-[5px] leading-[25px]">
      AC 入物
    </div>
    <div className="absolute left-[1350px] top-[915px] text-[47px] leading-[66px] font-bold text-[#ff2d2d] whitespace-nowrap">
      电脑技术网
    </div>
    <div className="absolute left-[1349px] top-[982px] text-[36px] leading-[42px] text-[#2b7de9] whitespace-nowrap [font-family:'Liberation_Serif',serif]">
      www.tagxp.com
    </div>
    <div className="absolute left-[1599px] top-[920px] w-[178px] h-[107px] bg-[#2f80ff] rounded-[24px] overflow-hidden">
      <div className="absolute left-[72px] top-[59px] text-[24px] leading-[30px] font-bold text-[#529aff] whitespace-nowrap">
        极光下载站
      </div>
      <div className="absolute left-[72px] top-[88px] text-[15px] leading-[18px] font-bold text-[#529aff] whitespace-nowrap">
        www.xz7.com
      </div>
      <svg width="46" height="40" viewBox="0 0 46 40" className="absolute left-[28px] top-[60px]">
        <path d="M4 30C8 10 30 2 44 6 28 8 16 16 14 26c-1 6 10 8 20 2-8 10-30 12-30 2z" fill="#529aff" />
      </svg>
      <div className="absolute left-[8px] top-[-5px] text-[92px] leading-[110px] font-semibold text-white tracking-[-3px] [font-family:'Open_Sans',sans-serif]">
        TAG
      </div>
    </div>
  </>
);

export default function App() {
  return (
    <div className="relative w-[1787px] h-[1033px] overflow-hidden bg-[#e6e6e6] border-l-2 border-[#217346] [font-family:'Liberation_Sans','Noto_Sans_CJK_SC',sans-serif]">
      {/* title + tabs */}
      <div className="h-[60px] bg-[#217346] text-white text-[12px] flex flex-col -ml-[2px]">
        <div className="h-[34px] pt-[1px] flex items-center relative">
          <div className="w-full text-center pl-[1px]">工作簿3.xlsx - Excel</div>
          <div className="absolute right-0 top-0 h-[34px] flex items-center">
            <svg width="13" height="11" viewBox="0 0 13 11" className="mr-[33px]">
              <path d="M.5.500h12v10H.5zM.5 3h12M6.500 9V5M4.500 6.500l2-2 2 2" fill="none" stroke="#fff" />
            </svg>
            <div className="w-[12px] h-[2px] bg-white mr-[35px]" />
            <div className="w-[10px] h-[10px] border border-t-2 border-white mr-[35px]" />
            <svg width="10" height="10" viewBox="0 0 10 10" className="mr-[17px]">
              <path d="M0 0l10 10M10 0L0 10" stroke="#fff" strokeWidth="1.800" />
            </svg>
          </div>
        </div>
        <div className="h-[26px] flex">
          {TABS.map(([t, w]) => (
            <div
              key={t}
              className={`${w} flex items-center justify-center ${t === '开始' ? 'bg-[#f1f1f1] text-[#217346]' : ''}`}
            >
              {t}
            </div>
          ))}
          <div className="ml-[14px] flex items-center gap-[3px] text-[#a9d0bb]">
            <svg width="10" height="15" viewBox="0 0 10 15">
              <path d="M3 11C3 8 .5 7.500 .5 5a4.500 4.500 0 0 1 9 0C9.500 7.500 7 8 7 11zM3.500 13h3" fill="none" stroke="#cfe3d8" />
            </svg>
            告诉我您想要做什么...
          </div>
          <div className="flex-1" />
          <div className="w-[33px] flex items-center">登录</div>
          <div className="w-[68px] h-[25px] bg-[#185c37] flex items-center pl-[7px] gap-[3px]">
            <svg width="14" height="16" viewBox="0 0 14 16">
              <circle cx="6" cy="5" r="4" fill="none" stroke="#fff" />
              <path d="M1 15c0-4 2-5 4-6M8 9l1 1M9 12h5M11.500 9.500v5" fill="none" stroke="#fff" />
            </svg>
            共享
          </div>
        </div>
      </div>

      <div className="-ml-[2px] pl-[2px]">
        <Ribbon />
        <QuickBar />
        <FormulaBar />
        <div className="h-[10px]" />
        <Sheet />
        <SheetTabs />
        <StatusBar />
      </div>

      <div className="absolute inset-0 -left-[2px]">
        <Overlays />
      </div>
    </div>
  );
}
